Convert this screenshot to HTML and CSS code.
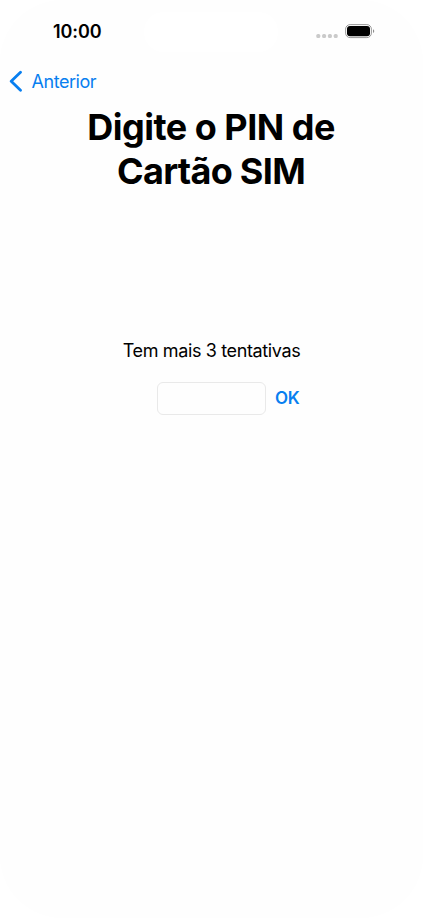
FILE: index.html
```
<!DOCTYPE html>
<html lang="pt">
<head>
<meta charset="utf-8">
<title>PIN do SIM</title>
<link rel="stylesheet" href="styles.css">
</head>
<body>
<main class="screen">
  <header class="status">
    <span class="time">10:00</span>
    <span class="island"></span>
    <span class="indicators">
      <svg class="signal" width="22" height="6" viewBox="0 0 22 6"><g fill="#cacaca"><rect x="0.300" y="1" width="4" height="4" rx="1.6"/><rect x="6.100" y="1" width="4" height="4" rx="1.6"/><rect x="11.900" y="1" width="4" height="4" rx="1.6"/><rect x="17.700" y="1" width="4" height="4" rx="1.6"/></g></svg>
      <svg class="battery" width="30" height="15" viewBox="0 0 30 15"><rect x=".6" y=".6" width="25.800" height="13" rx="4.500" fill="none" stroke="#999"/><rect x="2" y="2" width="23" height="10.300" rx="3"/><path d="M28 5.200c1.700.7 1.700 3.100 0 3.800z" fill="#909090"/></svg>
    </span>
  </header>
  <nav class="nav">
    <svg width="14" height="22" viewBox="0 0 14 22"><path d="M11.500 2.200 2.200 11.200l9.300 9" fill="none" stroke="#087ff0" stroke-width="2.800" stroke-linecap="round" stroke-linejoin="round"/></svg>
    <a class="back">Anterior</a>
  </nav>
  <h1 class="title"><span class="line1">Digite o PIN de</span><span class="line2">Cartão SIM</span></h1>
  <p class="attempts">Tem mais 3 tentativas</p>
  <form class="entry">
    <input class="pin" type="password" aria-label="PIN">
    <button class="ok" type="button">OK</button>
  </form>
</main>
</body>
</html>
```
FILE: styles.css
```
* { box-sizing: border-box; }
body { margin: 0; background: #fff; font-family: Inter, "Liberation Sans", sans-serif; color: #000; }
.screen { height: 918px; background: #fefefe; border-radius: 62px; overflow: hidden; }
.status { height: 63px; padding: 1px 48px 0 53px; display: flex; align-items: center; }
.time { width: 91px; font-size: 18px; font-weight: 600; line-height: 22px; letter-spacing: -.1px; }
.island { width: 134px; height: 40px; border-radius: 20px; background: #fff; }
.indicators { display: flex; align-items: center; gap: 7px; margin: -1px 0 0 auto; }
.signal { margin-top: 9px; }
.nav { height: 36px; padding-left: 9px; display: flex; align-items: center; gap: 8.500px; color: #087ff0; }
.back { font-size: 18px; letter-spacing: -.45px; }
.title { margin: 6px 0 0; font-size: 36px; line-height: 44px; font-weight: 700; text-align: center; letter-spacing: -.5px; }
.title span { display: block; }
.line1 { margin-right: 1px; }
.line2 { letter-spacing: -.7px; margin-right: 1px; }
.attempts { margin: 146px 0 0; font-size: 18px; line-height: 24px; text-align: center; letter-spacing: -.37px; }
.entry { margin: 19px 0 0 157px; display: flex; align-items: center; gap: 9px; }
.pin { width: 109px; height: 33px; border: 1px solid #e9e9e9; border-radius: 6px; background: #fefefe; padding: 0 8px; }
.ok { border: 0; padding: 0 0 1px; background: none; color: #087ff0; font: 600 17px/24px Inter, sans-serif; letter-spacing: -.4px; }
```
